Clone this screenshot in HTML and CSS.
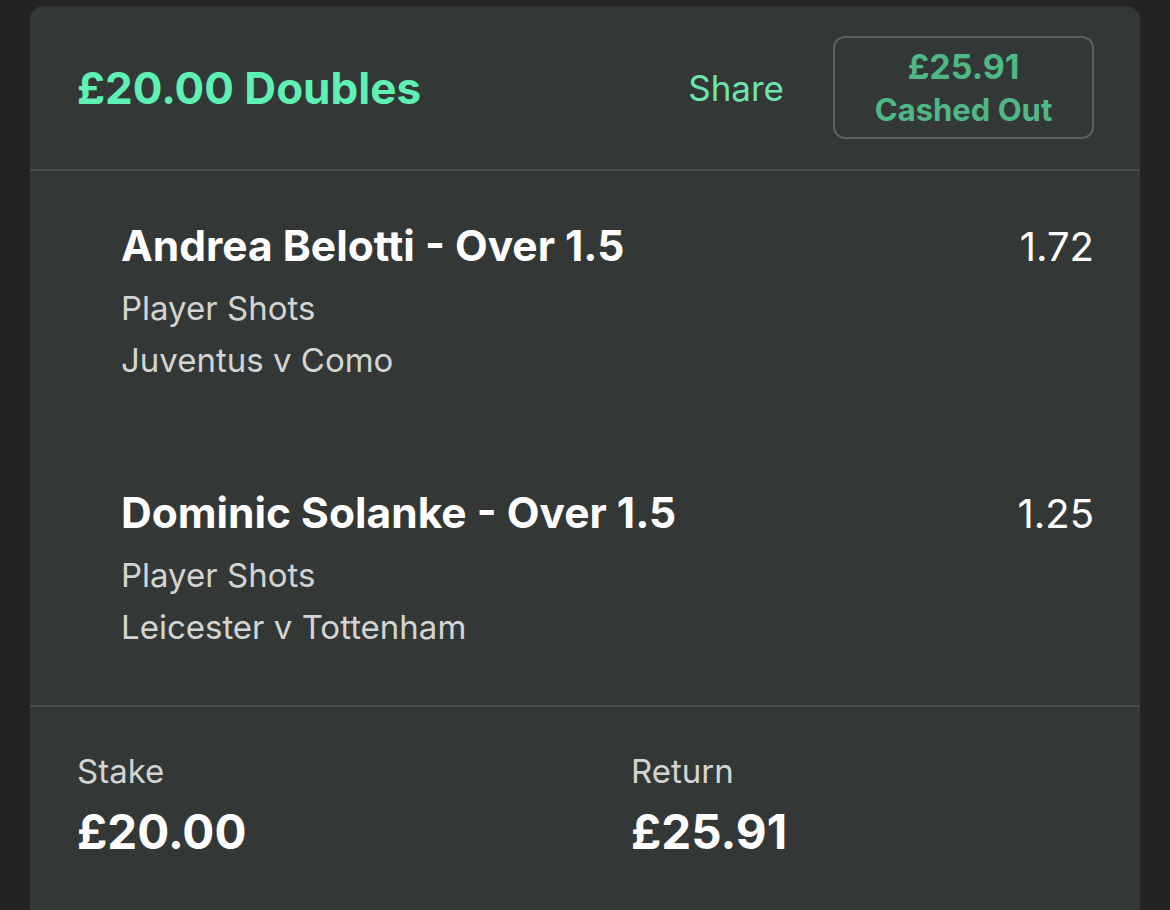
FILE: index.html
```html
<!DOCTYPE html>
<html lang="en">
<head>
<meta charset="utf-8">
<title>Bet</title>
<link rel="stylesheet" href="styles.css">
</head>
<body>
<div class="card">
  <div class="header">
    <div class="bet-title">£20.00 Doubles</div>
    <div class="header-actions">
      <div class="share">Share</div>
      <div class="cashout">
        <div class="cashout-amount">£25.91</div>
        <div class="cashout-label">Cashed Out</div>
      </div>
    </div>
  </div>
  <div class="selections">
    <div class="selection">
      <div class="sel-top">
        <div class="sel-name">Andrea Belotti - Over 1.5</div>
        <div class="sel-odds">1.72</div>
      </div>
      <div class="sel-market">Player Shots</div>
      <div class="sel-event">Juventus v Como</div>
    </div>
    <div class="selection">
      <div class="sel-top">
        <div class="sel-name">Dominic Solanke - Over 1.5</div>
        <div class="sel-odds">1.25</div>
      </div>
      <div class="sel-market">Player Shots</div>
      <div class="sel-event">Leicester v Tottenham</div>
    </div>
  </div>
  <div class="footer">
    <div class="stat">
      <div class="stat-label">Stake</div>
      <div class="stat-value">£20.00</div>
    </div>
    <div class="stat">
      <div class="stat-label">Return</div>
      <div class="stat-value">£25.91</div>
    </div>
  </div>
</div>
</body>
</html>
```

FILE: styles.css
```css
html, body {
  margin: 0;
  padding: 0;
  background: #232323;
  height: 100%;
  overflow: hidden;
}
body {
  font-family: Inter, "Noto Sans", sans-serif;
  padding: 6px 30px 0 30px;
  box-sizing: border-box;
}
.card {
  background: #333836;
  border-radius: 14px;
  height: 1000px;
  color: #fff;
}
.header {
  height: 163px;
  display: flex;
  align-items: center;
  justify-content: space-between;
  padding: 0 46px 0 47px;
  border-bottom: 2px solid #464b49;
}
.bet-title {
  color: #5ff1b4;
  font-weight: 700;
  font-size: 44px;
}
.header-actions {
  display: flex;
  align-items: center;
  gap: 49px;
}
.share {
  color: #6de6ad;
  font-size: 35px;
}
.cashout {
  width: 257px;
  height: 99px;
  border: 2px solid #5b5f5d;
  border-radius: 12px;
  display: flex;
  flex-direction: column;
  align-items: center;
  justify-content: center;
  color: #4fb886;
  font-weight: 700;
}
.cashout-amount {
  font-size: 34px;
  line-height: 43px;
}
.cashout-label {
  font-size: 31px;
  line-height: 43px;
}
.selections {
  padding: 48px 46px 0 91px;
  height: 536px;
  border-bottom: 2px solid #464b49;
  box-sizing: border-box;
}
.selection {
  height: 267px;
}
.sel-top {
  display: flex;
  justify-content: space-between;
  align-items: baseline;
}
.sel-name {
  font-weight: 700;
  font-size: 42.5px;
  line-height: 54px;
}
.sel-odds {
  font-size: 40px;
  line-height: 54px;
}
.sel-market {
  margin-top: 8px;
}
.sel-market, .sel-event {
  color: #d3d5d4;
  font-size: 33px;
  line-height: 52px;
}
.footer {
  display: grid;
  grid-template-columns: 554px 1fr;
  padding: 42px 46px 0 47px;
}
.stat-label {
  color: #d3d5d4;
  font-size: 33px;
  line-height: 44px;
}
.stat-value {
  margin-top: 7px;
  font-weight: 700;
  font-size: 47.5px;
  line-height: 64px;
}
```
